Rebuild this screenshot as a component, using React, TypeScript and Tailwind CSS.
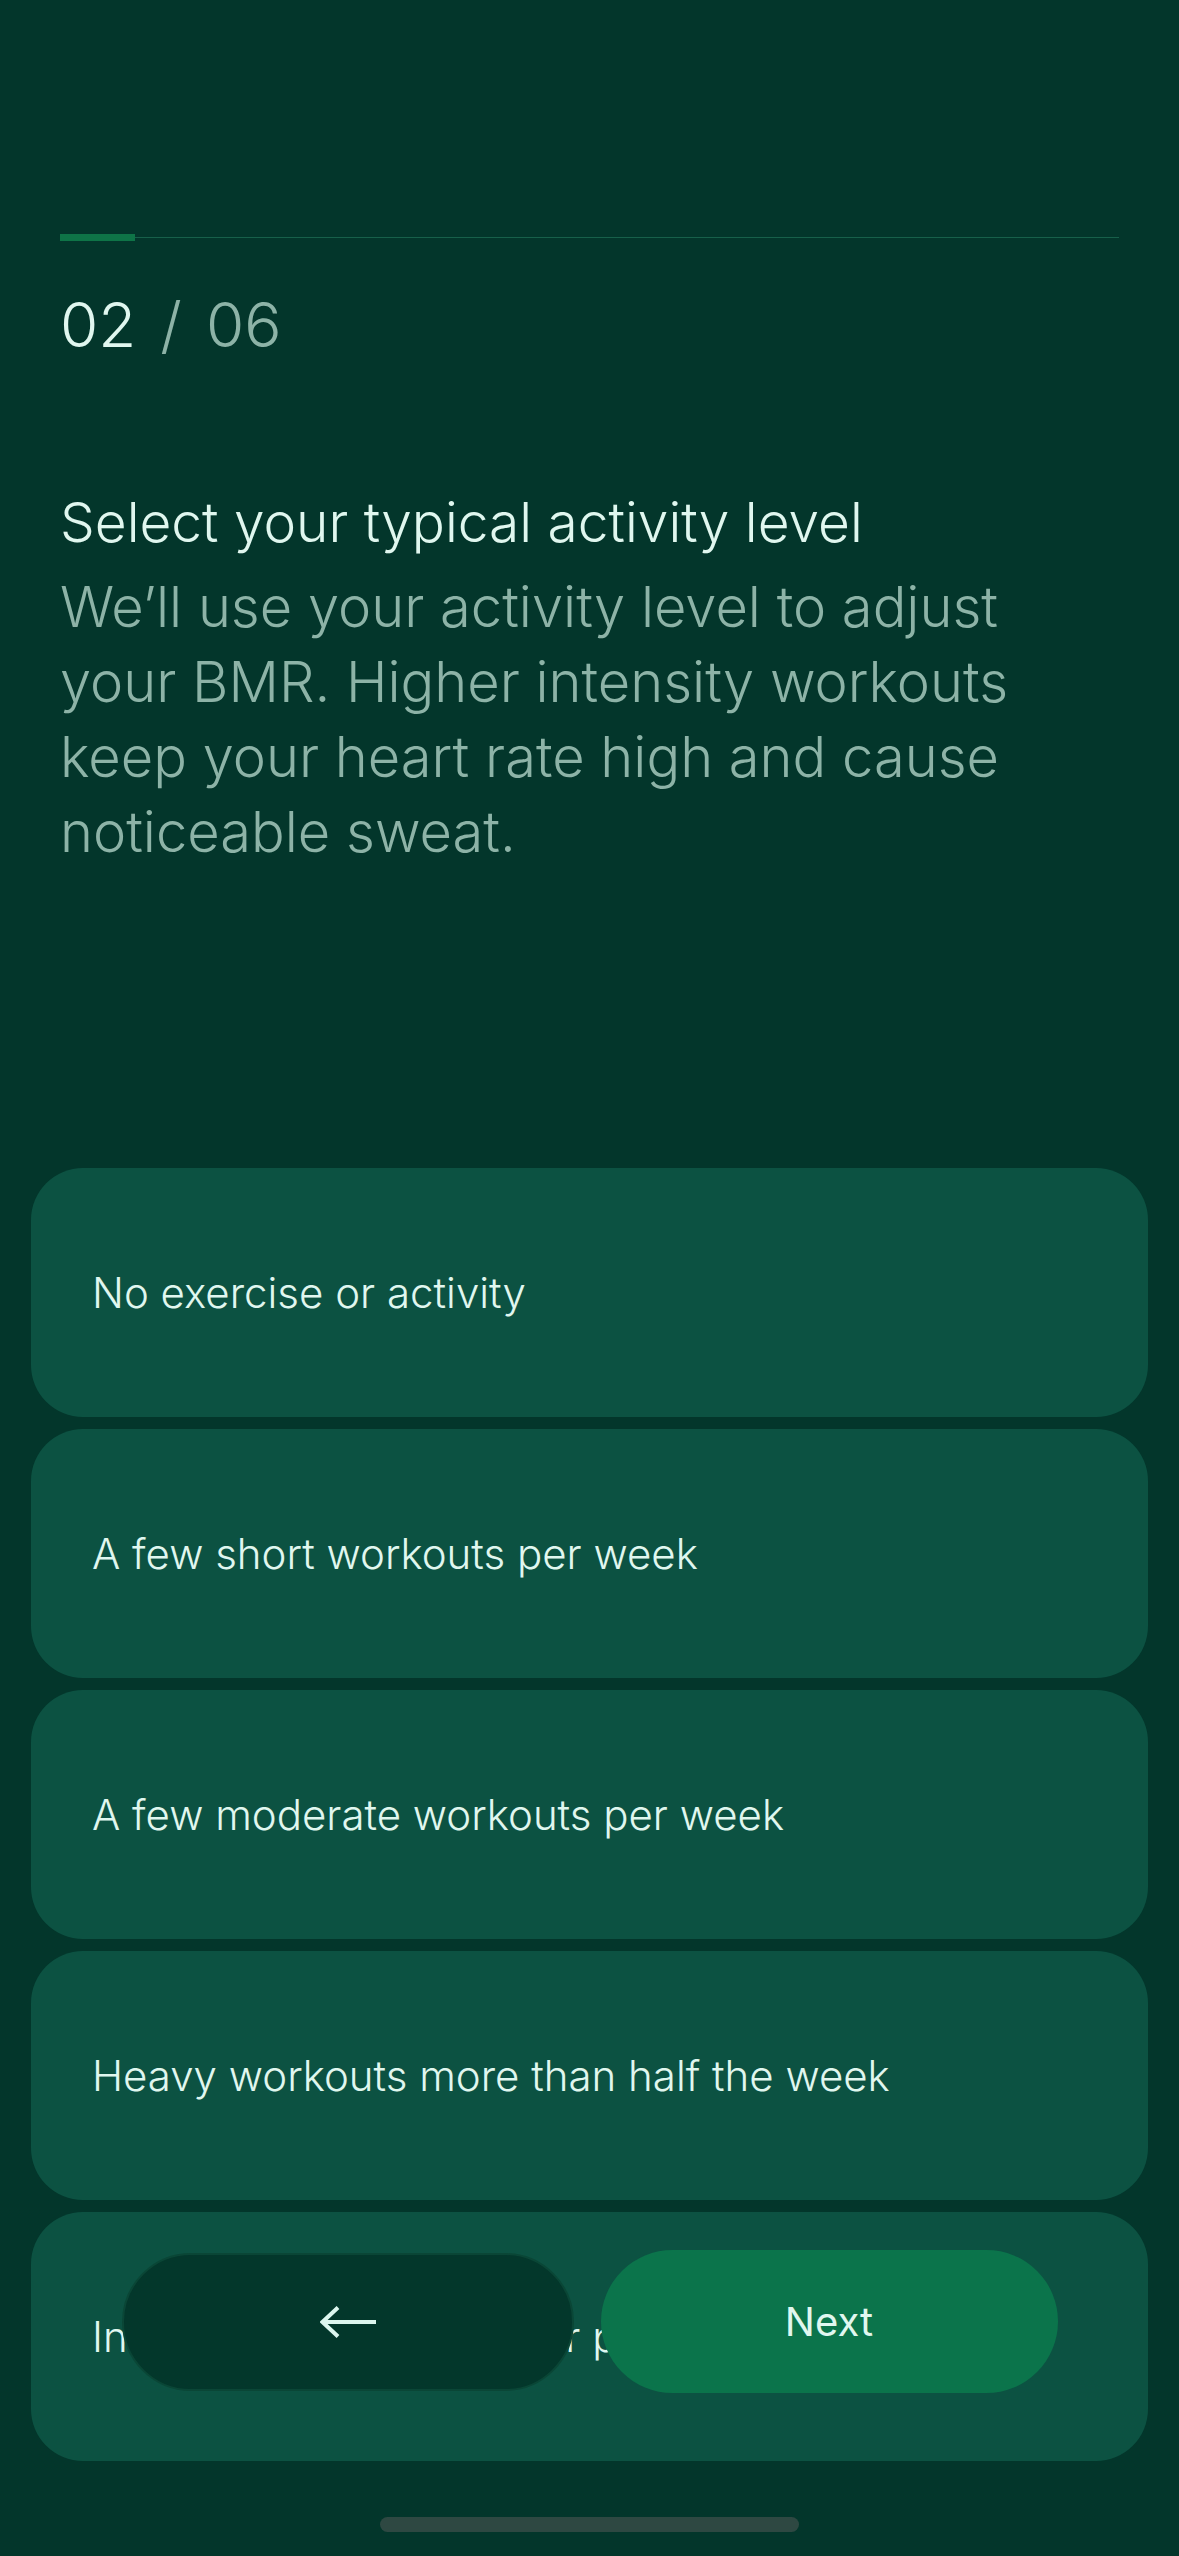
const options = [
  "No exercise or activity",
  "A few short workouts per week",
  "A few moderate workouts per week",
  "Heavy workouts more than half the week",
  "Intense workouts daily or physical job",
];

function BackArrow() {
  return (
    <svg width="56" height="32" viewBox="0 0 56 32" fill="none" stroke="#dcf6ee" strokeWidth="4">
      <path d="M18 1.5 L2.5 16 L18 30.5" strokeLinejoin="miter" />
      <path d="M2.5 16 H56" />
    </svg>
  );
}

export default function App() {
  return (
    <div className="relative h-[2556px] w-[1179px] overflow-hidden bg-[#03362b] font-['Inter',sans-serif] text-[#e0f7ef]">
      {/* Header: progress + step counter + copy */}
      <div className="px-[60px] pt-[234px]">
        <div className="relative h-[7px]">
          <div className="absolute left-0 right-0 top-[3px] h-px bg-[#17604a]" />
          <div className="absolute left-0 top-0 h-[7px] w-[75px] bg-[#0e7447]" />
        </div>

        <div className="mt-[54px] flex text-[62px] font-light leading-[60px]">
          <span>02</span>
          <span className="mx-[24px] text-[#8db3a7]">/</span>
          <span className="text-[#8db3a7]">06</span>
        </div>

        <h1 className="mt-[139px] text-[55px] font-light leading-[56px]">Select your typical activity level</h1>
        <p className="mt-[20px] max-w-[1000px] text-[56px] font-light leading-[75px] text-[#8db3a7]">
          We’ll use your activity level to adjust your BMR. Higher intensity workouts keep your heart rate high and cause noticeable sweat.
        </p>
      </div>

      {/* Options */}
      <div className="mt-[298px] flex flex-col gap-[12px] px-[31px]">
        {options.map((label) => (
          <button
            key={label}
            className="flex h-[249px] w-full items-center rounded-[52px] bg-[#0c5242] pl-[61px] text-left text-[42px] font-light text-[#e0f7ef]"
          >
            {label}
          </button>
        ))}
      </div>

      {/* Floating nav */}
      <div className="absolute bottom-[163px] left-0 right-0 flex items-center justify-center gap-[27px]">
        <button className="flex h-[138px] w-[452px] items-center justify-center rounded-full border-2 border-[#0a4636] bg-[#03372b]">
          <BackArrow />
        </button>
        <button className="flex h-[143px] w-[457px] items-center justify-center rounded-full bg-[#0b744b] text-[40px] font-normal text-[#e0f7ef]">
          Next
        </button>
      </div>

      {/* Home indicator */}
      <div className="absolute bottom-[24px] left-[380px] h-[15px] w-[419px] rounded-full bg-[#2e4842]" />
    </div>
  );
}
